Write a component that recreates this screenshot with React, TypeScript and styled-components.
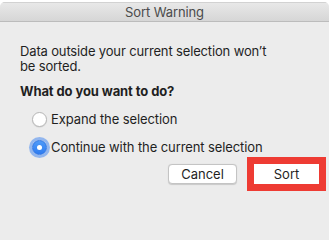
import React from "react";
import styled, { createGlobalStyle } from "styled-components";

const Global = createGlobalStyle`
  html, body { margin: 0; padding: 0; background: #ececec; overflow: hidden; }
  body { font-family: Inter, "Noto Sans", "Liberation Sans", sans-serif; -webkit-font-smoothing: antialiased; }
`;

const Screen = styled.div`
  width: 329px;
  min-height: 100vh;
  padding-top: 2px;
  box-sizing: border-box;
  background: #ffffff;
  display: flex;
  flex-direction: column;
`;

const Window = styled.div`
  width: 329px;
  flex: 1;
  display: flex;
  flex-direction: column;
  background: #ececec;
  border-radius: 5px 5px 0 0;
  overflow: hidden;
`;

const TitleBar = styled.div`
  height: 18px;
  flex: none;
  display: flex;
  align-items: center;
  justify-content: center;
  background: linear-gradient(#e8e8e8, #d6d6d6);
  border-top: 1px solid #d2d2d2;
  border-bottom: 1px solid #bcbcbc;
  color: #4b4b4b;
  font-size: 13px;
  letter-spacing: -0.1px;
`;

const Body = styled.div`
  display: flex;
  flex-direction: column;
  padding: 22px 0 0 20px;
  color: #1f1f1f;
  font-size: 13px;
`;

const Message = styled.p`
  margin: 0;
  line-height: 15px;
  width: 255px;
  letter-spacing: -0.15px;
`;

const Question = styled.p`
  margin: 9px 0 0;
  font-weight: 700;
  line-height: 16px;
  letter-spacing: -0.1px;
`;

const Options = styled.div`
  display: flex;
  flex-direction: column;
  gap: 12px;
  margin: 12px 0 0 12px;
`;

const Option = styled.div`
  display: flex;
  align-items: center;
  gap: 4px;
  height: 16px;
  letter-spacing: -0.1px;
`;

const Radio = styled.span<{ $checked?: boolean }>`
  width: 15px;
  height: 15px;
  box-sizing: border-box;
  border-radius: 50%;
  flex: none;
  display: flex;
  align-items: center;
  justify-content: center;
  background: ${(p) => (p.$checked ? "linear-gradient(#4f9bf8, #2f7cf0)" : "#ffffff")};
  border: 1px solid ${(p) => (p.$checked ? "#2f76e6" : "#b7b7b7")};
  box-shadow: ${(p) => (p.$checked ? "0 0 0 3px rgba(86, 146, 240, 0.6)" : "0 0.5px 1px rgba(0,0,0,0.12)")};
  &::after {
    content: "";
    display: ${(p) => (p.$checked ? "block" : "none")};
    width: 5px;
    height: 5px;
    border-radius: 50%;
    background: #ffffff;
  }
`;

const Buttons = styled.div`
  display: flex;
  justify-content: flex-end;
  align-items: center;
  gap: 10px;
  margin-top: 2px;
  padding-right: 3px;
`;

const Button = styled.button`
  height: 20px;
  box-sizing: border-box;
  background: #ffffff;
  border: 1px solid #c4c4c4;
  border-radius: 4px;
  box-shadow: 0 0.5px 1px rgba(0, 0, 0, 0.15);
  font-family: inherit;
  font-size: 13px;
  color: #1f1f1f;
  padding: 0;
  display: flex;
  align-items: center;
  justify-content: center;
  flex: none;
`;

const CancelButton = styled(Button)`
  width: 69px;
`;

const SortButton = styled(Button)`
  width: 65px;
  border: none;
  border-radius: 0;
  box-shadow: none;
`;

const Highlight = styled.div`
  border: 7px solid #ee3b33;
  display: flex;
  flex: none;
`;

export default function App() {
  return (
    <>
      <Global />
      <Screen>
        <Window>
          <TitleBar>Sort Warning</TitleBar>
          <Body>
            <Message>Data outside your current selection won’t be sorted.</Message>
            <Question>What do you want to do?</Question>
            <Options>
              <Option>
                <Radio />
                <span>Expand the selection</span>
              </Option>
              <Option>
                <Radio $checked />
                <span>Continue with the current selection</span>
              </Option>
            </Options>
            <Buttons>
              <CancelButton>Cancel</CancelButton>
              <Highlight>
                <SortButton>Sort</SortButton>
              </Highlight>
            </Buttons>
          </Body>
        </Window>
      </Screen>
    </>
  );
}
